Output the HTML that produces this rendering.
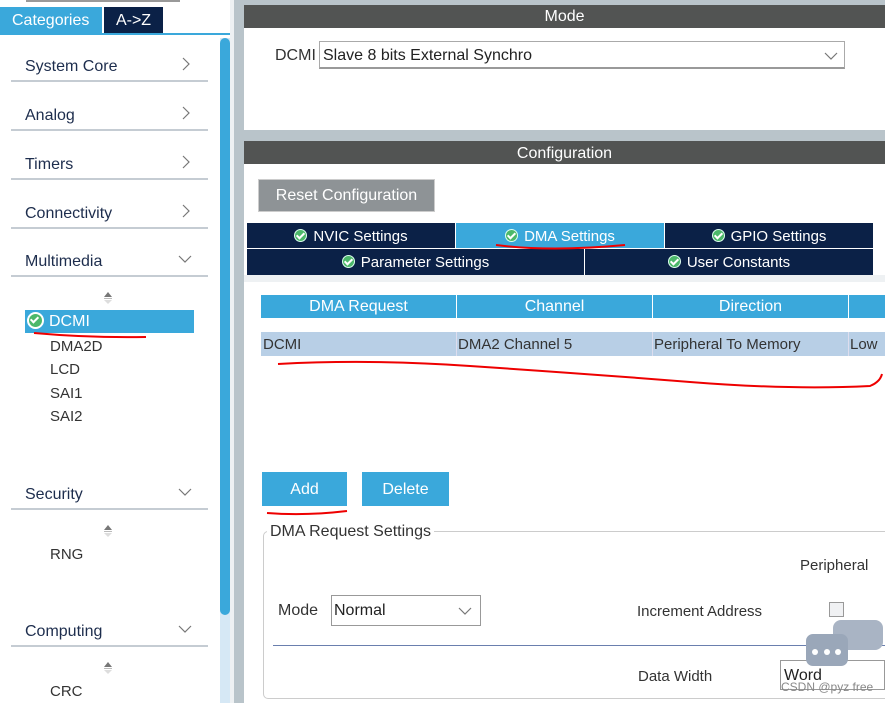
<!DOCTYPE html>
<html><head><meta charset="utf-8"><style>
*{margin:0;padding:0;box-sizing:border-box}
body{width:885px;height:703px;overflow:hidden;background:#fff;font-family:"Liberation Sans",sans-serif;position:relative;color:#222}
.a{position:absolute}
.cat{font-size:16px;color:#1d2d4d}
.line{height:2px;background:#c5ccd3}
.item{font-size:15px;color:#333}
.th{background:#3aa8db;color:#fff;font-size:16px;text-align:center;line-height:23px;height:23px}
.td{font-size:15px;color:#333;line-height:24px;height:24px;padding-left:2px;padding-top:1px}
.tab{background:#0b2147;color:#fff;font-size:15px;text-align:center;line-height:27px}
.ck{display:inline-block;width:13px;height:13px;border-radius:50%;background:#4cb86a;border:1.5px solid #dfe;vertical-align:-1px;margin-right:6px;position:relative}
.ck:after{content:"";position:absolute;left:3px;top:1px;width:3px;height:6px;border:solid #fff;border-width:0 2px 2px 0;transform:rotate(45deg)}
.sm{width:12px;height:14px}
</style></head><body>
<svg width="0" height="0" style="position:absolute"><defs>
<symbol id="r" viewBox="0 0 10 14"><path d="M2 1 L8 7 L2 13" stroke="#777" stroke-width="1.2" fill="none"/></symbol>
<symbol id="d" viewBox="0 0 14 10"><path d="M1 2 L7 8 L13 2" stroke="#777" stroke-width="1.2" fill="none"/></symbol>
<symbol id="u" viewBox="0 0 12 14"><path d="M6 1 L10 6 L2 6 Z" fill="#777"/><rect x="2" y="7" width="8" height="1" fill="#bbb"/><path d="M2 9 L10 9 L6 13 Z" fill="#ddd"/></symbol>
</defs></svg>
<!-- left -->
<div class="a" style="left:26px;top:0;width:154px;height:2px;background:#999"></div>
<div class="a" style="left:0;top:7px;width:102px;height:26px;background:#3aa8db;color:#fff;font-size:16px;line-height:28px;padding-left:12px">Categories</div>
<div class="a" style="left:104px;top:7px;width:59px;height:26px;background:#0b2147;color:#fff;font-size:16px;line-height:28px;text-align:center">A-&gt;Z</div>
<div class="a" style="left:0;top:33px;width:232px;height:2px;background:#3aa8db"></div>
<div class="a" style="left:220px;top:38px;width:10px;height:665px;background:#d6e8f5"></div>
<div class="a" style="left:220px;top:38px;width:10px;height:577px;background:#3aa8db;border-radius:5px"></div>
<div class="a" style="left:230px;top:0;width:4px;height:703px;background:#eef1f3"></div>
<div class="a" style="left:234px;top:0;width:10px;height:703px;background:#b9c4ca"></div>

<div class="a cat" style="left:25px;top:58px">System Core</div><svg class="a" style="left:181px;top:57px" width="10" height="14"><use href="#r"/></svg><div class="a line" style="left:11px;top:80px;width:197px"></div>
<div class="a cat" style="left:25px;top:107px">Analog</div><svg class="a" style="left:181px;top:106px" width="10" height="14"><use href="#r"/></svg><div class="a line" style="left:11px;top:129px;width:197px"></div>
<div class="a cat" style="left:25px;top:156px">Timers</div><svg class="a" style="left:181px;top:155px" width="10" height="14"><use href="#r"/></svg><div class="a line" style="left:11px;top:178px;width:197px"></div>
<div class="a cat" style="left:25px;top:205px">Connectivity</div><svg class="a" style="left:181px;top:204px" width="10" height="14"><use href="#r"/></svg><div class="a line" style="left:11px;top:227px;width:197px"></div>
<div class="a cat" style="left:25px;top:253px">Multimedia</div><svg class="a" style="left:178px;top:254px" width="14" height="10"><use href="#d"/></svg><div class="a line" style="left:11px;top:275px;width:197px"></div>
<svg class="a sm" style="left:102px;top:291px"><use href="#u"/></svg>
<div class="a" style="left:25px;top:310px;width:169px;height:23px;background:#3aa8db;color:#fff;font-size:16px;line-height:24px;padding-left:2px"><span class="ck" style="width:17px;height:17px;margin-right:5px;vertical-align:-3px;border:2px solid #fff"></span>DCMI</div>
<svg class="a" style="left:30px;top:330px" width="120" height="12"><path d="M4 3 Q60 8 116 7" stroke="#e00" stroke-width="2" fill="none"/></svg>
<div class="a item" style="left:50px;top:338px">DMA2D</div>
<div class="a item" style="left:50px;top:361px">LCD</div>
<div class="a item" style="left:50px;top:385px">SAI1</div>
<div class="a item" style="left:50px;top:408px">SAI2</div>
<div class="a cat" style="left:25px;top:486px">Security</div><svg class="a" style="left:178px;top:487px" width="14" height="10"><use href="#d"/></svg><div class="a line" style="left:11px;top:508px;width:197px"></div>
<svg class="a sm" style="left:102px;top:524px"><use href="#u"/></svg>
<div class="a item" style="left:50px;top:546px">RNG</div>
<div class="a cat" style="left:25px;top:623px">Computing</div><svg class="a" style="left:178px;top:624px" width="14" height="10"><use href="#d"/></svg><div class="a line" style="left:11px;top:645px;width:197px"></div>
<svg class="a sm" style="left:102px;top:661px"><use href="#u"/></svg>
<div class="a item" style="left:50px;top:683px">CRC</div>

<!-- right -->
<div class="a" style="left:244px;top:0;width:641px;height:703px;background:#b9c4ca"></div>
<div class="a" style="left:244px;top:5px;width:641px;height:23px;background:#525453;color:#fff;font-size:16px;text-align:center;line-height:24px">Mode</div>
<div class="a" style="left:244px;top:28px;width:641px;height:102px;background:#fff"></div>
<div class="a" style="left:275px;top:47px;font-size:16px;color:#333">DCMI</div>
<div class="a" style="left:319px;top:41px;width:526px;height:28px;border:1px solid #aaa;border-bottom:2px solid #999;font-size:16px;line-height:27px;padding-left:3px;color:#222">Slave 8 bits External Synchro<svg style="position:absolute;right:6px;top:9px" width="14" height="10"><use href="#d"/></svg></div>
<div class="a" style="left:244px;top:141px;width:641px;height:23px;background:#525453;color:#fff;font-size:16px;text-align:center;line-height:25px">Configuration</div>
<div class="a" style="left:244px;top:164px;width:641px;height:539px;background:#fff"></div>
<div class="a" style="left:258px;top:179px;width:177px;height:33px;background:#8e9396;border:1px solid #ccc;color:#fff;font-size:16px;text-align:center;line-height:32px">Reset Configuration</div>
<div class="a tab" style="left:247px;top:223px;width:208px;height:25px"><span class="ck"></span>NVIC Settings</div>
<div class="a tab" style="left:456px;top:223px;width:208px;height:25px;background:#3aa8db"><span class="ck"></span>DMA Settings</div>
<div class="a tab" style="left:665px;top:223px;width:208px;height:25px"><span class="ck"></span>GPIO Settings</div>
<div class="a tab" style="left:247px;top:248px;width:337px;height:27px;border-top:1px solid #fff"><span class="ck"></span>Parameter Settings</div>
<div class="a tab" style="left:585px;top:248px;width:288px;height:27px;border-top:1px solid #fff"><span class="ck"></span>User Constants</div>
<svg class="a" style="left:490px;top:240px" width="140" height="14"><path d="M6 5 Q60 12 135 5" stroke="#e00" stroke-width="2" fill="none"/></svg>
<div class="a" style="left:244px;top:275px;width:641px;height:7px;background:#eef1f3"></div>
<div class="a th" style="left:261px;top:295px;width:195px;line-height:24px">DMA Request</div>
<div class="a th" style="left:457px;top:295px;width:195px;line-height:24px">Channel</div>
<div class="a th" style="left:653px;top:295px;width:195px;line-height:24px">Direction</div>
<div class="a th" style="left:849px;top:295px;width:36px"></div>
<div class="a" style="left:261px;top:332px;width:624px;height:24px;background:#b8cfe6"></div>
<div class="a td" style="left:261px;top:332px">DCMI</div>
<div class="a" style="left:456px;top:332px;width:1px;height:24px;background:#dde"></div>
<div class="a td" style="left:456px;top:332px">DMA2 Channel 5</div>
<div class="a" style="left:652px;top:332px;width:1px;height:24px;background:#dde"></div>
<div class="a td" style="left:652px;top:332px">Peripheral To Memory</div>
<div class="a" style="left:848px;top:332px;width:1px;height:24px;background:#dde"></div>
<div class="a td" style="left:848px;top:332px">Low</div>
<svg class="a" style="left:270px;top:360px" width="615" height="36"><path d="M8 4 Q100 -1 200 6 Q320 14 420 22 Q520 30 600 26 Q610 22 612 14" stroke="#e00" stroke-width="2" fill="none"/></svg>
<div class="a" style="left:262px;top:472px;width:85px;height:34px;background:#3aa8db;color:#fff;font-size:16px;text-align:center;line-height:35px">Add</div>
<div class="a" style="left:362px;top:472px;width:87px;height:34px;background:#3aa8db;color:#fff;font-size:16px;text-align:center;line-height:35px">Delete</div>
<svg class="a" style="left:265px;top:508px" width="90" height="10"><path d="M2 5 Q40 8 82 3" stroke="#e00" stroke-width="2" fill="none"/></svg>
<div class="a" style="left:263px;top:531px;width:630px;height:168px;border:1px solid #ccc;border-radius:5px"></div>
<div class="a" style="left:267px;top:523px;background:#fff;padding:0 3px;font-size:16px;color:#333">DMA Request Settings</div>
<div class="a" style="left:800px;top:557px;font-size:15px;color:#333">Peripheral</div>
<div class="a" style="left:278px;top:602px;font-size:16px;color:#333">Mode</div>
<div class="a" style="left:331px;top:595px;width:150px;height:31px;border:1px solid #999;font-size:16px;line-height:30px;padding-left:2px;color:#222">Normal<svg style="position:absolute;right:8px;top:10px" width="14" height="10"><use href="#d"/></svg></div>
<div class="a" style="left:637px;top:603px;font-size:15px;color:#333">Increment Address</div>
<div class="a" style="left:829px;top:602px;width:15px;height:15px;border:1px solid #999;background:#f0f1f3"></div>
<div class="a" style="left:273px;top:645px;width:612px;height:1px;background:#6a7fae"></div>
<div class="a" style="left:638px;top:668px;font-size:15px;color:#333">Data Width</div>
<div class="a" style="left:780px;top:660px;width:105px;height:30px;border:1px solid #999;font-size:16px;line-height:29px;padding-left:3px;color:#222">Word</div>
<svg class="a" style="left:806px;top:620px" width="79" height="60"><rect x="27" y="0" width="50" height="30" rx="8" fill="#a9b4c4"/><rect x="0" y="14" width="42" height="32" rx="7" fill="#9aa7b9"/><circle cx="9" cy="32" r="3" fill="#fff"/><circle cx="21" cy="32" r="3" fill="#fff"/><circle cx="32" cy="32" r="3" fill="#fff"/></svg>
<div class="a" style="left:781px;top:680px;font-size:12px;color:#888">CSDN @pyz free</div>
</body></html>
